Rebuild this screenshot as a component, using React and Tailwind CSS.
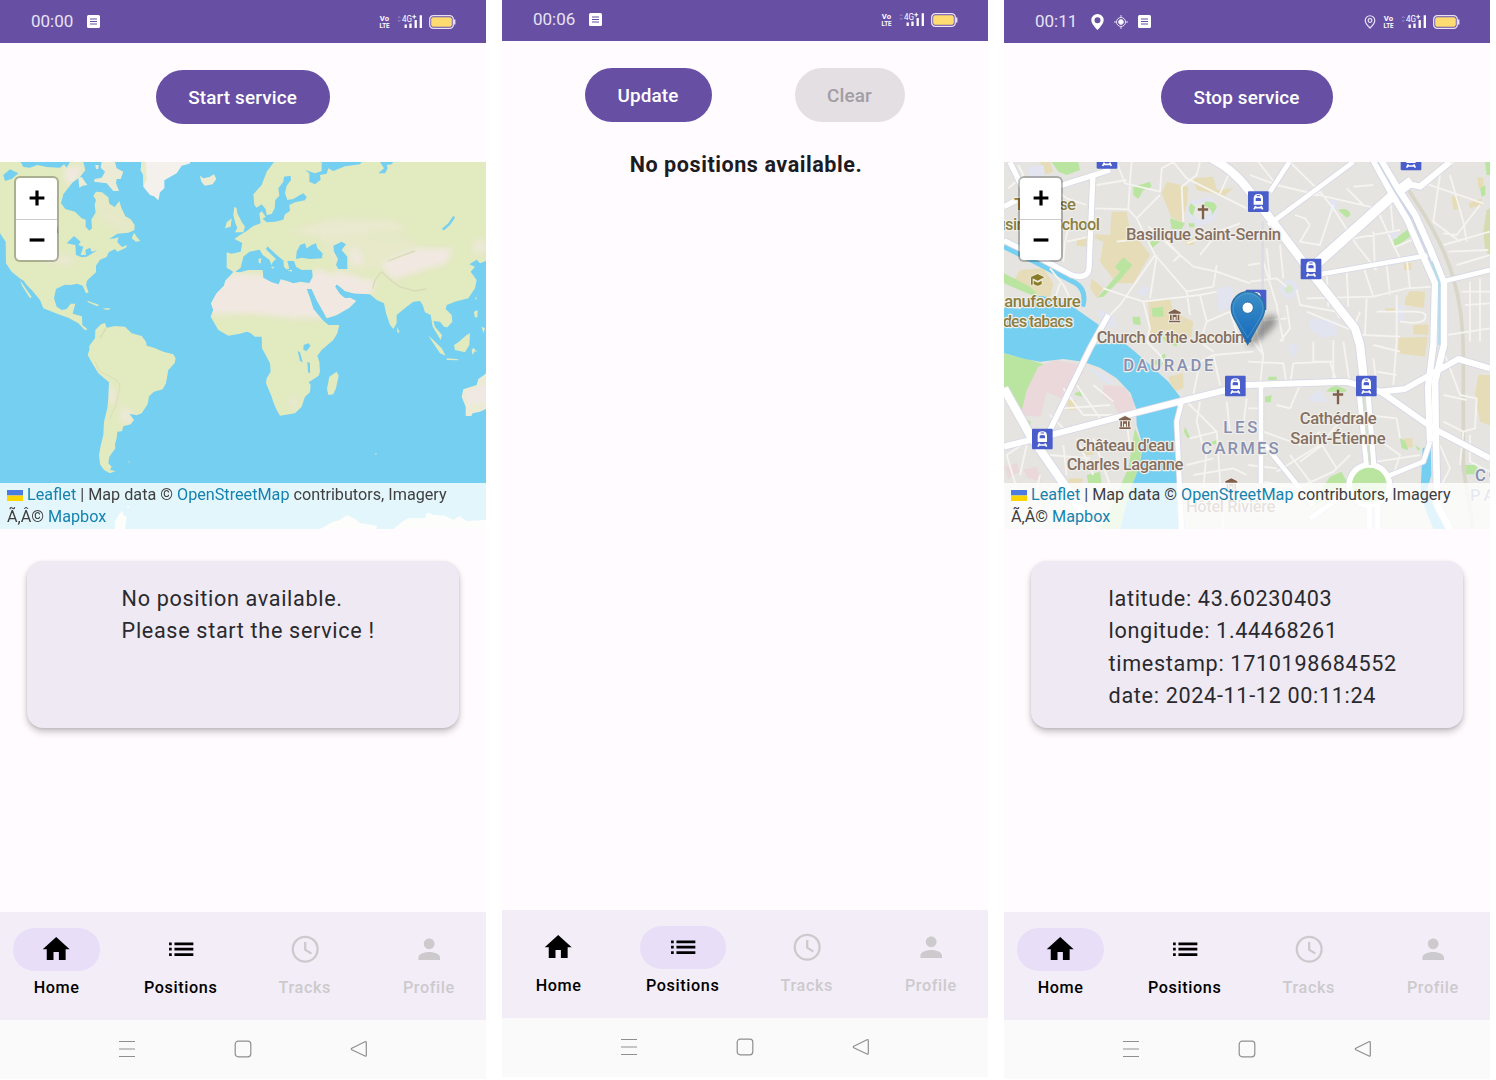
import React from "react";

/* ---------- maps ---------- */

const LAND = "#e2eabf";
const SEA = "#75cff0";

function WorldMap() {
  return (
    <svg className="block h-[367px] w-[486px]" viewBox="0 21 1458 1101" preserveAspectRatio="none">
      <defs>
        <filter id="soft" x="-20%" y="-20%" width="140%" height="140%">
          <feGaussianBlur stdDeviation="9" />
        </filter>
        <clipPath id="land">
          <path id="americas" d="M0,21 L62,21 L70,36 L90,38 L112,30 L140,36 L180,38 L192,28 L200,38 L210,21 L250,21 L256,46 L240,66 L218,82 L207,96 L190,118 L183,145 L196,162 L225,170 L245,190 L257,194 L257,215 L268,227 L276,220 L274,194 L287,172 L284,150 L288,135 L280,122 L288,110 L306,112 L325,127 L328,146 L344,156 L358,138 L364,158 L376,184 L392,193 L404,210 L403,226 L385,233 L352,236 L328,252 L346,250 L356,246 L352,262 L366,276 L381,270 L378,278 L352,290 L345,282 L326,292 L320,306 L300,314 L288,332 L288,352 L262,376 L258,390 L266,412 L258,415 L248,392 L232,386 L212,390 L194,389 L168,402 L162,430 L170,455 L185,465 L200,462 L212,446 L226,446 L218,476 L246,484 L247,510 L263,523 L255,526 L235,505 L205,488 L175,478 L130,460 L120,435 L95,405 L62,372 L35,350 L18,325 L17,260 L0,235 Z" />
          <path d="M268,572 L285,550 L286,525 L303,508 L315,504 L320,518 L345,513 L375,515 L395,535 L425,543 L438,560 L440,572 L462,578 L490,590 L520,598 L527,610 L524,624 L505,645 L498,685 L488,703 L462,710 L447,724 L443,748 L425,775 L410,781 L388,776 L402,795 L392,808 L370,814 L366,829 L352,830 L350,850 L345,868 L346,880 L328,905 L325,925 L335,935 L330,945 L347,948 L330,955 L312,945 L300,928 L297,900 L302,872 L310,840 L312,800 L322,760 L325,730 L327,682 L295,655 L275,622 L263,600 L268,585 Z" />
          <path d="M822,21 L800,50 L785,90 L760,118 L763,150 L770,158 L785,148 L797,163 L800,180 L815,177 L824,160 L826,135 L838,122 L835,100 L850,80 L852,65 L872,62 L873,75 L860,92 L855,115 L862,135 L880,132 L900,120 L910,115 L920,126 L915,136 L885,142 L868,150 L870,168 L855,178 L850,194 L825,200 L800,202 L788,192 L797,185 L785,168 L778,176 L782,205 L760,213 L740,228 L720,240 L703,252 L727,264 L722,290 L695,296 L680,292 L680,338 L700,350 L695,357 L676,377 L672,392 L650,415 L633,445 L640,465 L632,485 L655,525 L685,542 L720,536 L740,530 L750,533 L765,545 L785,545 L786,580 L810,625 L812,650 L800,670 L798,685 L815,725 L820,742 L830,765 L840,782 L885,775 L905,755 L915,725 L930,712 L932,690 L926,682 L956,662 L960,650 L958,620 L952,602 L965,585 L1000,555 L1012,535 L1018,510 L985,510 L970,497 L955,480 L940,462 L930,430 L920,402 L935,402 L950,435 L970,470 L980,490 L1010,480 L1048,458 L1068,438 L1050,428 L1035,430 L1020,418 L1005,395 L1010,388 L1020,395 L1035,408 L1060,415 L1110,418 L1130,435 L1152,445 L1158,475 L1170,510 L1180,522 L1190,505 L1190,480 L1220,455 L1240,440 L1260,438 L1268,450 L1275,472 L1292,480 L1298,515 L1310,535 L1322,555 L1326,540 L1305,515 L1300,498 L1320,500 L1332,515 L1342,517 L1357,500 L1355,480 L1337,462 L1340,450 L1365,440 L1405,430 L1425,400 L1430,375 L1412,350 L1425,335 L1408,328 L1430,314 L1440,325 L1458,318 L1458,21 Z" />
        </clipPath>
      </defs>
      <rect x="0" y="0" width="1458" height="1140" fill={SEA} />
      <g clipPath="url(#land)">
        <rect x="0" y="0" width="1458" height="1140" fill={LAND} />
        <g fill="#f1e8e2" filter="url(#soft)">
          <path d="M620,478 L630,400 L700,352 L790,360 L940,380 L975,480 L960,490 L880,490 L760,476 Z" />
          <path d="M915,380 L950,340 L1000,360 L1030,410 L1110,370 L1130,380 L1110,420 L1070,460 L985,500 L940,440 Z" />
          <path d="M1000,345 L1060,360 L1110,380 L1090,415 L1020,410 Z" />
          <path d="M1050,275 L1075,285 L1090,320 L1060,335 Z" />
          <path d="M1140,330 L1200,300 L1260,280 L1360,280 L1340,325 L1270,345 L1180,375 Z" />
          <path d="M190,40 L250,30 L230,80 L200,90 Z" />
          <path d="M325,690 L342,700 L345,740 L328,750 Z" />
          <path d="M360,750 L400,770 L395,810 L360,800 Z" opacity=".7" />
          <path d="M120,280 L180,300 L230,310 L210,330 L130,320 Z" opacity=".6" />
          <path d="M860,230 L1000,190 L1180,195 L1230,230 L1100,230 L960,250 Z" opacity=".45" />
          <path d="M960,240 L1080,230 L1240,250 L1260,290 L1100,350 L1000,330 Z" opacity=".3" />
          <path d="M280,110 L400,200 L380,240 L300,200 Z" opacity=".3" />
          <path d="M1420,260 L1458,250 L1458,290 L1420,300 Z" opacity=".7" />
          <path d="M870,720 L900,730 L890,765 L860,750 Z" opacity=".5" />
        </g>
        <path d="M1145,350 L1175,378 L1200,396 L1245,408 L1280,402 M1145,350 L1125,375 L1118,400 M1165,318 L1200,304 L1245,288" fill="none" stroke="#d9dbb8" strokeWidth="4" />
        <path d="M285,620 L300,650 L345,672 L360,690 L348,750 L330,790" fill="none" stroke="#dbdcb9" strokeWidth="3" />
        <path d="M300,548 L318,520" fill="none" stroke="#d8d9b6" strokeWidth="4" />
      </g>
      <g fill={SEA}>
        <path d="M706,350 L722,338 L730,305 L748,290 L778,284 L800,280 L802,274 L830,300 L852,318 L856,340 L868,342 L862,318 L882,318 L888,335 L905,345 L936,344 L938,365 L928,384 L902,380 L880,385 L862,378 L842,373 L836,388 L815,382 L790,368 L788,345 L745,345 L720,352 Z" />
        <path d="M888,312 L890,290 L900,270 L915,265 L920,280 L935,270 L948,265 L952,280 L968,295 L966,310 L930,312 L905,308 Z" />
        <path d="M1000,272 L1025,260 L1038,268 L1025,285 L1042,305 L1042,342 L1015,342 L1008,330 L1014,312 L1002,290 Z" />
        <path d="M915,45 L928,55 L928,80 L945,88 L962,74 L960,60 L980,56 L985,40 L1000,48 L1035,34 L1080,28 L1085,21 L965,21 L965,48 L945,55 Z" />
        <path d="M1140,21 L1152,40 L1135,55 L1155,55 L1163,40 L1160,30 L1175,28 L1180,21 Z" />
        <path d="M1360,182 L1365,188 L1350,210 L1332,226 L1325,222 L1345,205 Z" />
        <path d="M200,265 L222,243 L242,260 L235,270 L250,275 L242,300 L258,300 L256,285 L270,278 L275,290 L292,286 L260,305 L245,307 L228,300 L226,270 Z" />
        <path d="M10,60 L30,43 L55,55 L35,72 L15,78 Z M165,215 L172,212 L175,235 L168,235 Z" />
        <path d="M911,570 L925,565 L932,572 L920,588 L910,585 Z M893,588 L900,592 L908,622 L900,618 Z M922,620 L930,625 L930,655 L924,652 Z" />
        <path d="M62,372 L72,378 L100,425 L92,430 Z" />
      </g>
      <g fill={LAND}>
        <path d="M770,268 L790,268 L800,285 L828,312 L818,322 L815,330 L808,314 L788,300 Z M812,335 L822,335 L820,342 Z M775,312 L784,310 L782,325 L777,325 Z M862,345 L876,345 L876,350 Z" />
        <path d="M850,318 L862,330 L862,345 L852,335 Z" />
        <path d="M703,155 L710,160 L712,175 L725,200 L735,215 L730,232 L705,232 L712,218 L706,205 L700,180 Z M680,202 L695,190 L692,215 L675,220 Z" />
        <path d="M1010,650 L1016,662 L1008,700 L1000,718 L985,720 L981,702 L988,665 Z" />
        <path d="M60,375 L95,426 L90,430 L66,392 Z" />
        <path d="M395,250 L402,233 L412,248 L421,258 L408,260 Z M262,437 L298,450 L292,454 L264,442 Z M310,460 L332,460 L325,465 L312,463 Z" />
        <path d="M1285,542 L1300,555 L1325,580 L1337,602 L1320,595 L1300,565 Z M1340,610 L1375,613 L1375,616 L1340,615 Z M1362,570 L1375,562 L1400,540 L1410,535 L1408,570 L1395,592 L1365,585 Z M1415,585 L1420,578 L1432,592 L1425,588 L1418,600 Z M1422,470 L1433,465 L1432,488 L1424,485 Z M1445,515 L1455,520 L1450,535 Z M1190,515 L1199,530 L1193,535 Z M1426,428 L1431,426 L1428,436 Z" />
      </g>
      <g fill="#ecebd5">
        <path d="M602,72 L600,62 L610,70 L628,66 L642,58 L649,72 L638,88 L615,92 L605,82 Z" />
        <path d="M305,21 L345,21 L350,40 L370,50 L362,72 L350,72 L348,85 L357,108 L340,108 L320,85 L282,80 L284,72 L305,68 L315,50 L302,38 Z" />
        <path d="M235,68 L245,66 L262,90 L248,92 L238,98 Z M286,30 L296,30 L295,42 L288,42 Z" />
        <path d="M1458,655 L1452,660 L1435,672 L1430,690 L1390,703 L1385,725 L1397,755 L1397,783 L1414,783 L1418,775 L1440,770 L1458,762 Z" />
      </g>
      <path d="M1395,710 L1458,690 L1458,740 L1405,750 Z" fill="#f0e8e2" />
      <path d="M425,21 L422,45 L430,60 L430,95 L450,120 L462,124 L475,136 L480,112 L493,100 L493,76 L530,55 L545,32 L568,26 L572,21 Z" fill="#f4f1ec" />
      <path d="M425,21 L422,45 L430,60 L432,90 L440,75 L438,21 Z" fill="#e6eccb" />
      <g fill="#f6f6f0">
        <path d="M345,1122 L345,1098 L360,1075 L368,1068 L370,1080 L380,1085 L375,1122 Z M380,1055 L390,1052 L385,1060 Z" />
        <path d="M960,1122 L1000,1100 L1020,1095 L1040,1080 L1065,1092 L1080,1104 L1130,1112 L1130,1122 Z M1180,1122 L1210,1098 L1225,1090 L1275,1090 L1282,1072 L1300,1080 L1335,1082 L1360,1095 L1378,1084 L1400,1098 L1458,1095 L1458,1122 Z" />
      </g>
      <path d="M384,918 l6,2 l-3,4z M1124,896 l6,-1 v4 h-5z" fill="#c8e3da" />
    </svg>
  );
}

const STATIONS = [
  [321, 10], [775, 140], [933, 342], [768, 435], [1233, 15], [706, 693], [1099, 693], [127, 852],
];

function Station({ x, y }) {
  return (
    <g transform={`translate(${x} ${y})`}>
      <rect x="-31" y="-31" width="62" height="62" rx="3" fill="#4a5ecb" />
      <path d="M-14,9 V-10 Q-14,-23 0,-23 Q14,-23 14,-10 V9 Z" fill="#fff" />
      <path d="M-8,-2 V-9 Q-8,-12 0,-12 Q8,-12 8,-9 V-2 Z" fill="#4a5ecb" />
      <path d="M-5,-18 H5" stroke="#4a5ecb" strokeWidth="3" />
      <path d="M-13,23 L-8,13 M13,23 L8,13 M-11,18 H11" stroke="#fff" strokeWidth="5" />
    </g>
  );
}

function Label({ x, y, w, color = "#857062", size = 50, children }) {
  return (
    <text
      x={x}
      y={y}
      textLength={w}
      fontSize={size}
      fill={color}
      stroke="#f1efea"
      strokeWidth="7"
      strokeLinejoin="round"
      paintOrder="stroke"
      className="font-['Roboto',sans-serif] font-medium"
    >
      {children}
    </text>
  );
}

function Museum({ x, y }) {
  return (
    <g transform={`translate(${x} ${y})`} fill="#80604d" stroke="#f1efea" strokeWidth="5" paintOrder="stroke">
      <path d="M-18,-11 L0,-20 L18,-11 V-7 H-18 Z M-14,-4 H-9 V12 H-14 Z M9,-4 H14 V12 H9 Z M-17,14 H17 V19 H-17 Z M-6,-4 H6 V12 H3 V3 H-3 V12 H-6 Z" />
    </g>
  );
}

function Cross({ x, y }) {
  return <path d={`M${x - 3.5},${y - 22} h7 v11 h12 v7 h-12 v26 h-7 v-26 h-12 v-7 h12 z`} fill="#80604d" />;
}

function CityMap() {
  return (
    <svg className="block h-[367px] w-[486px]" viewBox="12 21 1458 1101" preserveAspectRatio="none">
      <defs>
        <linearGradient id="pin" x1="0" y1="0" x2="0" y2="1">
          <stop offset="0" stopColor="#3a8fc7" />
          <stop offset="1" stopColor="#1668bb" />
        </linearGradient>
        <filter id="blur5" x="-30%" y="-30%" width="160%" height="160%">
          <feGaussianBlur stdDeviation="9" />
        </filter>
      </defs>
      <rect x="0" y="0" width="1490" height="1140" fill="#e5e4e0" />
      {/* fields and parks */}
      <g fill="#e6ddb8">
        <path d="M335,170 L380,170 L388,215 L450,300 L400,385 L350,385 L300,320 L310,260 L285,250 L285,238 L330,240 Z" />
        <path d="M485,115 L500,80 L565,95 L560,150 L545,200 L515,190 Z M580,70 L640,65 L650,105 L700,100 L670,125 L640,115 L590,105 Z" />
        <path d="M60,345 L130,340 L160,385 L150,430 L80,410 L40,380 Z M275,370 L310,400 L290,430 L270,400 Z M230,250 L260,245 L260,275 L230,272 Z" />
        <path d="M445,440 L510,430 L520,470 L580,500 L575,545 L520,560 L450,540 Z M120,21 L150,21 L160,50 L130,60 Z" />
        <path d="M505,665 L550,655 L550,700 L520,710 Z M200,735 L228,735 L228,765 L203,765 Z M1215,430 L1230,408 L1275,410 L1272,460 L1215,450 Z M1240,510 L1285,508 L1285,540 L1240,538 Z M1195,548 L1283,545 L1275,605 L1195,595 Z M1435,660 L1480,660 L1480,815 L1440,800 L1425,720 Z M1212,323 h22 v22 h-22z M1355,125 l20,-2 l5,38 l-20,5z M1405,145 L1445,130 L1445,150 L1410,160 Z M1432,65 L1450,70 V100 L1435,100 Z M1210,850 h28 v28 h-20z M975,520 h25 v25 h-25z M205,970 L250,970 L240,1000 L205,1000 Z M250,885 h30 v15 h-30z M555,250 h28 v20 h-25z M1155,460 h30 v10 h-30z" />
      </g>
      <g fill="#b9e5a0">
        <path d="M155,21 L235,21 L240,45 L200,60 L175,50 Z M400,95 L450,80 L455,95 L430,105 L415,132 L400,120 Z M12,355 L90,395 L120,425 L95,420 L12,385 Z" />
        <path d="M345,335 L370,307 L397,330 L360,375 L310,425 L292,428 L360,350 Z M510,190 L555,205 L545,222 L515,222 Z M445,265 L470,250 L480,260 L455,280 Z M397,485 L420,485 L422,510 L400,508 Z M455,460 L490,455 L490,485 L458,485 Z M500,530 L535,540 L530,575 L490,555 Z" />
        <path d="M12,595 L90,615 L130,628 L95,680 L60,790 L30,745 L12,690 Z M75,795 L92,798 L90,820 Z M405,820 L425,870 L420,930 L385,1020 L360,1122 L300,1122 L340,1040 L385,940 Z M225,715 L240,708 L248,725 L225,720 Z M260,960 L300,950 L305,985 L265,985 Z M358,730 L375,725 L390,765 L370,775 Z" />
        <path d="M1180,255 L1225,222 L1230,245 L1185,278 Z M1015,165 Q1045,155 1052,180 L1040,188 Z M980,710 Q1000,680 1040,705 L1035,712 Z M1396,930 h35 v28 h-35z M1440,100 L1456,90 L1456,120 L1445,125 Z M1200,850 L1215,858 L1225,885 L1205,880 Z M1245,870 L1260,880 L1255,888 Z M990,965 L1025,950 L1040,980 L1000,1020 L930,1060 L960,1010 Z M805,665 L830,665 L830,675 L805,675 Z M795,725 L815,720 L812,742 L795,742 Z M1455,21 H1470 V60 L1460,60 Z M555,815 L570,845 L562,850 L552,830 Z M635,860 L650,855 L655,868 L635,868 Z M480,635 L455,625 L495,595 L500,620 Z" />
        <path d="M1460,165 L1470,160 V310 L1455,280 L1450,230 Z" fill="#d5dcb0" />
      </g>
      <path d="M115,635 L165,615 L235,628 L252,645 L225,700 L195,735 L140,710 L122,785 L62,780 L80,705 Z M310,690 L370,695 L402,735 L400,780 L360,785 L340,745 L308,725 Z M12,935 L50,925 L60,950 L25,970 Z M70,945 L110,935 L125,980 L85,970 Z" fill="#ead8da" />
      <g fill="#e2e4ef">
        <path d="M80,35 L130,30 L135,60 L95,75 Z M650,400 L697,392 L705,455 L655,470 Z M430,390 L447,400 L435,425 L410,415 Z M570,140 L635,125 L655,165 L640,200 L590,215 L560,180 Z M290,460 L340,480 L350,520 L310,510 Z M255,635 L320,660 L350,690 L320,685 Z" />
        <circle cx="868" cy="402" r="28" />
        <path d="M930,490 L1010,495 L1010,540 L975,550 L930,525 Z M990,135 h22 v30 h-22z M925,725 L960,705 L985,740 L930,740 Z M865,565 L895,570 L885,605 L868,590 Z M1190,450 h22 v50 h-22z M1165,230 h28 v20 h-28z" />
      </g>
      <circle cx="866" cy="402" r="13" fill="#d6e7cc" />
      <path d="M575,150 Q580,190 600,195 L638,165 L625,142 Z" fill="#e9e8e2" />
      <path d="M572,145 Q558,170 578,182 L586,155 Z M615,140 Q650,138 650,158 L636,180 Q638,160 612,152 Z M565,205 h18 v12 h-14z" fill="#b9e5a0" />
      {/* railway */}
      <path d="M1180,110 Q1210,75 1235,120 Q1330,260 1360,370 Q1390,470 1390,600 V940 L1420,1122" fill="none" stroke="#d7d6c8" strokeWidth="11" />
      {/* river and canals */}
      <path d="M12,455 L60,462 L90,440 L120,422 L155,428 L225,460 L300,512 L268,570 L370,562 L405,590 L450,630 L505,680 L540,725 L530,800 L525,860 L530,930 L545,1000 L555,1122 L360,1122 L385,1020 L420,930 L428,870 L410,810 L408,760 L392,715 L350,670 L300,638 L250,620 L190,612 L120,620 L75,612 L12,594 Z" fill={SEA} />
      <path d="M12,275 L100,318 L225,383 Q262,405 248,455" fill="none" stroke={SEA} strokeWidth="15" />
      <path d="M1268,880 L1292,870 L1294,960 L1280,1010 L1320,1090 L1335,1122 L1300,1122 L1275,1060 L1262,1000 L1265,940 Z" fill={SEA} />
      {/* minor streets */}
      <g fill="none" stroke="#f5f4f0" strokeWidth="5.5" strokeLinejoin="round">
        <path d="M285,160 L385,163 L410,190 L465,300 L560,410 L640,395 M385,163 L390,80 L395,21 M350,21 L375,85 L480,110 L485,40 L520,21 M410,190 L480,120 M445,215 L580,335 L650,350 L750,385 M500,260 L540,300 L520,320 M560,265 L720,205 M600,300 L640,250 L700,235 M465,300 L360,450 L330,480 M450,430 L470,300 M430,440 L600,420 L650,410 M310,400 L430,440 L450,520 L440,560 M600,420 L620,500 L690,470 M560,410 L570,480 M640,395 L650,330 M290,90 L380,75 M160,100 L200,130 L260,150 M200,260 L270,245 M210,200 L195,260 L190,320 M150,340 L190,390 L215,440 M55,30 L70,60 L25,100 M300,21 L290,60 M520,21 L560,70 L740,160 M600,21 L590,60 L545,95 L550,200 M690,50 L660,115 M180,385 L165,430 M350,260 L430,250 M620,500 L600,560 L640,590 M690,470 L720,560 M440,560 L480,600 L500,640" />
        <path d="M750,60 L830,90 L1000,130 L1130,160 M775,21 L830,90 M870,21 L960,110 L1000,160 L1070,270 L1130,345 M900,140 L960,110 M885,180 L915,190 L930,210 M930,210 L900,260 L960,270 L1000,150 M1060,95 L1120,90 M1090,150 L1040,100 M1130,160 L1180,270 L1200,310 M1120,230 L1125,345 M1170,130 L1180,225 M1010,260 L1200,225 M1180,278 L1260,245 M980,345 L985,455 M1040,340 L1045,455 M1090,335 L1120,425 M1160,330 L1170,420 M1220,310 L1230,400 M920,430 L1120,425 L1220,400 L1300,395 M920,470 L1090,540 L1200,545 M1100,430 L1095,540 M1190,420 L1190,560 M1130,470 H1240 Q1285,470 1275,490 Q1270,510 1200,500" />
        <path d="M1270,100 L1360,21 M1260,80 L1450,145 M1320,60 L1300,200 L1380,260 M1350,60 L1390,200 L1400,260 M1330,235 L1370,240 L1440,150 M1330,270 L1470,230 M1345,290 L1465,285 M1370,330 L1470,300 M1385,410 H1470 M1395,450 L1470,445 M1410,380 V560 M1440,370 V560 M1340,540 L1470,520 M1330,720 L1400,735 M1330,800 L1390,830 M1410,840 V920 L1470,950 M1320,560 L1380,720 L1430,730 L1425,820 L1390,830 L1380,930 M1320,870 L1350,940 L1320,1000 M1080,470 L1060,520 M990,440 L1020,490" />
        <path d="M760,560 L790,600 L780,690 M745,440 L790,600 M790,320 L830,450 L850,560 M745,330 L780,325 M750,380 L830,370 L860,395 M800,280 L810,370 M840,270 L850,370 M890,405 L900,450 L1010,470 M860,450 L870,520 L840,560 M750,500 L860,490 M745,620 L850,625 L860,690 M870,690 L880,625 L990,620 L1010,680 M1000,555 V680 M940,560 V620 L1000,620 M1030,560 L1050,690 M1120,570 L1200,590 M1130,650 L1190,660 M1120,610 L1130,690 M1190,560 L1180,690 M830,750 L870,760 L900,690 M790,830 L900,870 L960,830 M830,950 L960,870 L1020,800 M900,920 L980,860 M930,980 L870,900 M870,1010 L1000,950 L1050,900 M960,860 L1010,940 M1100,780 L1190,790 L1200,850 M1130,850 L1200,900 L1180,960 M1130,920 L1260,900 M790,980 L900,1000 M745,760 L790,760 M745,930 L830,940" />
        <path d="M560,640 L640,600 L760,590 M600,620 L580,720 M640,600 L660,690 M560,740 L650,830 L670,1122 M570,850 L650,830 M600,740 L590,800 L610,880 M680,740 L690,830 M560,930 L640,910 M580,960 L700,940 L740,960 M620,880 L610,1010 M740,730 L730,810 M190,700 L250,780 L340,780 M230,690 L300,790 M190,760 L330,750 M150,780 L200,830 M280,690 L340,740 M230,850 L280,960 M280,850 L330,990 M190,870 L200,960 M150,900 L270,910 M110,840 L20,900 M20,900 L50,1000 M80,870 L60,960 M120,960 L90,1100 M380,800 L390,880" />
      </g>
      {/* main roads */}
      <path d="M788,200 V555" fill="none" stroke="#d9d9e7" strokeWidth="8" opacity=".8" />
      {[["#d6d7e6", 5], ["#ffffff", 0]].map(([c, extra]) => (
        <g key={c} fill="none" stroke={c} strokeLinejoin="round">
          <path strokeWidth={16 + extra} d="M12,257 L100,299 L215,360 Q262,375 267,340 L279,55 M12,155 L60,130 L330,45 M30,21 L70,105 M325,480 L270,580 L145,835" />
          <path strokeWidth={18 + extra} d="M12,875 L160,838 L350,788 L545,738 L738,690 L1038,680 L1140,710 L1215,702 L1375,612 L1470,640" />
          <path strokeWidth={14 + extra} d="M545,740 L530,800 L545,1122 M805,210 L1060,21 M810,110 L868,21 M965,357 L1290,300 M1325,380 L1470,345 M783,690 L783,985 M795,870 L940,1050 M1160,965 L1270,920 L1290,860 M930,1090 L1060,1000" />
          <path strokeWidth={25 + extra} d="M12,700 L90,840 L190,985 L280,1122 M610,0 Q690,30 750,110 L920,335 L1065,520 L1080,570 L1092,680" />
          <path strokeWidth={30 + extra} d="M945,330 L1180,120 L1235,78" />
          <path strokeWidth={18 + extra} d="M1220,85 L1260,95 L1350,21 M1140,708 L1300,820 L1470,910" />
          <path strokeWidth={19 + extra} d="M1120,15 L1172,110 L1222,195 L1270,305 L1305,385 L1300,570 L1284,700 L1290,860" />
          <path strokeWidth={20 + extra} d="M1142,15 L1190,95 L1246,180 L1292,285 L1332,385 L1332,570 L1305,680 L1308,870 L1312,1050 L1350,1122" />
          <path strokeWidth={15 + extra} d="M1075,690 L1100,935 M1102,690 L1122,935 M1108,1050 V1122 M1133,1050 V1122" />
          <circle cx="1108" cy="990" r="60" strokeWidth={18 + extra} />
        </g>
      ))}
      <path d="M1133,20 L1182,105 L1236,190 L1282,295 L1305,350" fill="none" stroke="#cdd6e6" strokeWidth="5" />
      <path d="M1295,320 L1318,380 V570" fill="none" stroke="#b5dcec" strokeWidth="7" />
      <path d="M1088,700 L1110,930" stroke="#d5decf" strokeWidth="7" />
      <circle cx="1108" cy="990" r="52" fill="#b9e5a0" />
      {/* labels */}
      <Label x={42} y={165} w={186} color="#8b7f42">Toulouse</Label>
      <Label x={-40} y={225} w={340} color="#8b7f42">Business School</Label>
      <g transform="translate(111 375)" fill="#8a7b25" stroke="#f1efea" strokeWidth="4" paintOrder="stroke">
        <path d="M-20,-8 L2,-18 L22,-8 L2,2 Z M-10,2 L2,8 L14,2 V12 Q2,22 -10,12 Z M-18,-6 h5 v20 h-5z" />
      </g>
      <Label x={-30} y={457} w={272} color="#8b7f42">Manufacture</Label>
      <Label x={8} y={515} w={212} color="#8b7f42">des tabacs</Label>
      <Cross x={609} y={171} />
      <Label x={378} y={256} w={465}>Basilique Saint-Sernin</Label>
      <Museum x={524} y={483} />
      <Label x={290} y={565} w={466}>Church of the Jacobins</Label>
      <Label x={370} y={648} w={270} color="#8890b2">DAURADE</Label>
      <Label x={670} y={835} w={102} color="#8890b2">LES</Label>
      <Label x={604} y={897} w={232} color="#8890b2">CARMES</Label>
      <Cross x={1014} y={726} />
      <Label x={899} y={808} w={231}>Cathédrale</Label>
      <Label x={871} y={866} w={286}>Saint-Étienne</Label>
      <Museum x={375} y={803} />
      <Label x={227} y={887} w={296}>Château d'eau</Label>
      <Label x={200} y={945} w={350}>Charles Laganne</Label>
      <Museum x={694} y={990} />
      <Label x={558} y={1070} w={268}>Hôtel Rivière</Label>
      <Label x={1425} y={978} w={76} color="#8890b2">CO</Label>
      <Label x={1410} y={1038} w={74} color="#8890b2">PA</Label>
      {STATIONS.map(([x, y]) => (
        <Station key={`${x}-${y}`} x={x} y={y} />
      ))}
      {/* location pin */}
      <path d="M742,568 L785,495 Q820,470 830,490 Q835,520 750,574 Z" fill="#000" opacity=".35" filter="url(#blur5)" />
      <path
        d="M743,568 L710,504 Q694,480 694,460 A50,50 0 0 1 794,460 Q794,480 778,504 Z"
        fill="url(#pin)"
        stroke="#2c6fa5"
        strokeWidth="4"
      />
      <path d="M743,548 L714,500 Q699,476 699,460 A45,45 0 0 1 789,460 Q789,476 774,500 Z" fill="none" stroke="#69aad6" strokeWidth="3" opacity=".5" />
      <circle cx="743" cy="458" r="17" fill="#fff" stroke="#2c6fa5" strokeWidth="3" />
    </svg>
  );
}

function MapBox({ children }) {
  return (
    <div className="relative mt-[38px] h-[367px] w-full overflow-hidden">
      {children}
      <div className="absolute left-[14px] top-[14px] flex h-[86px] w-[45px] flex-col rounded-[6px] border-2 border-black/25 bg-white bg-clip-padding">
        <div className="flex h-[42px] items-center justify-center border-b border-[#ccc] pb-px pl-px">
          <svg viewBox="0 0 16 16" className="h-4 w-4" stroke="#000" strokeWidth="3.2"><path d="M.6 8H15.4M8 .6V15.4" /></svg>
        </div>
        <div className="flex flex-1 items-center justify-center pb-px pl-px">
          <svg viewBox="0 0 16 16" className="h-4 w-4" stroke="#000" strokeWidth="3.2"><path d="M.6 8H15.4" /></svg>
        </div>
      </div>
      <div className="absolute inset-x-0 bottom-0 h-[46px] whitespace-nowrap bg-white/80 px-[7px] pt-px text-[16.2px] leading-[22px] text-[#404040]">
        <div className="flex items-center">
          <svg viewBox="0 0 16 11" className="mr-1 h-[11px] w-4">
            <path fill="#4c7be1" d="M0 0h16v5.5H0z" />
            <path fill="#ffd500" d="M0 5.5h16V11H0z" />
          </svg>
          <span className="whitespace-pre">
            <span className="text-[#1583ae]">Leaflet</span> | Map data © <span className="text-[#1583ae]">OpenStreetMap</span> contributors, Imagery
          </span>
        </div>
        <div>Ã‚Â© <span className="text-[#1583ae]">Mapbox</span></div>
      </div>
    </div>
  );
}

/* ---------- status bar ---------- */

function NoteIcon() {
  return (
    <svg viewBox="0 0 13 13" className="h-[13px] w-[13px]">
      <rect width="13" height="13" rx="1.5" fill="#fff" />
      <path d="M3 4h7M3 6.5h7M3 9h7" stroke="#6750a4" strokeWidth="1.1" />
    </svg>
  );
}

function StatusBar({ time, located, tall }) {
  return (
    <div className={`flex shrink-0 items-center bg-[#6750a4] pl-[31px] pr-[30px] text-[#e8e2f4] ${tall ? "h-[43px]" : "h-[41px] pb-[2px]"}`}>
      <span className="w-[43px] text-[17px] leading-none">{time}</span>
      {located ? (
        <div className="ml-[13px] flex items-center">
          <svg viewBox="0 0 13 16" className="h-4 w-[13px]">
            <path fillRule="evenodd" fill="#fff" d="M6.5 0A6.2 6.2 0 0 0 .3 6.2C.3 10 6.500 16 6.500 16S12.700 10 12.700 6.200A6.200 6.200 0 0 0 6.500 0ZM6.500 3.200a3 3 0 1 1 0 6 3 3 0 0 1 0-6Z" />
          </svg>
          <svg viewBox="0 0 14 14" className="ml-[10px] h-[14px] w-[14px]" fill="none" stroke="#e8e2f4">
            <circle cx="7" cy="7" r="4.500" />
            <circle cx="7" cy="7" r="2.400" fill="#fff" />
            <path d="M7 0v2.500M7 11.500V14M0 7h2.500M11.500 7H14" />
          </svg>
          <div className="ml-[10px]"><NoteIcon /></div>
        </div>
      ) : (
        <div className="ml-[13px]"><NoteIcon /></div>
      )}
      <div className="ml-auto flex items-center">
        {located && (
          <svg viewBox="0 0 12 15" className="mr-[7px] h-[14px] w-[12px]" fill="none" stroke="#e8e2f4" strokeWidth="1.300">
            <path d="M6 .8A5.100 5.100 0 0 0 .9 5.900C.9 9.300 6 14 6 14s5.100-4.700 5.100-8.100A5.100 5.100 0 0 0 6 .8Z" />
            <circle cx="6" cy="5.900" r="2" />
          </svg>
        )}
        <svg viewBox="0 0 11 15" className="h-[15px] w-[11px] overflow-visible font-['Roboto',sans-serif] font-bold" fill="#fff">
          <text x="0.800" y="7" fontSize="8" textLength="9.200" lengthAdjust="spacingAndGlyphs">Vo</text>
          <text x="0.500" y="14" fontSize="8" textLength="10" lengthAdjust="spacingAndGlyphs">LTE</text>
        </svg>
        <svg viewBox="0 0 26 15" className="ml-[7px] h-[15px] w-[26px] overflow-visible">
          <path d="M1 4l1.200-1.500L3.400 4M1 6l1.200 1.500L3.400 6" fill="none" stroke="#a396c9" strokeWidth=".8" />
          <text x="5" y="7.600" fontSize="8.500" textLength="10" lengthAdjust="spacingAndGlyphs" fill="#fff" className="font-['Roboto',sans-serif]">4G</text>
          <path d="M15.200 2.800h4M17.200 .8v4" stroke="#fff" strokeWidth="1.100" />
          <path d="M8.700 10.500V14M13.500 9.500V14M18.700 6V14M23.800 1.200V14" stroke="#fff" strokeWidth="2.300" />
        </svg>
        <svg viewBox="0 0 27 14" className="ml-[6px] h-[14px] w-[27px]">
          <rect x=".7" y=".7" width="23.600" height="12.600" rx="3.600" fill="#6750a4" stroke="#e8e2f4" strokeWidth="1.300" />
          <rect x="2.200" y="2.200" width="20.600" height="9.600" rx="2" fill="#ffdc72" />
          <path d="M25.700 4.500v5" stroke="#e8e2f4" strokeWidth="1.400" />
        </svg>
      </div>
    </div>
  );
}

/* ---------- bottom navigation ---------- */

const ICONS = {
  Home: <path d="M10 20v-6h4v6h5v-8h3L12 3 2 12h3v8z" />,
  Positions: <path d="M3 7h2v2H3zM3 11h2v2H3zM3 15h2v2H3zM7 7h14v2H7zM7 11h14v2H7zM7 15h14v2H7z" />,
  Tracks: (
    <g fill="none" stroke="currentColor" strokeWidth="1.700">
      <circle cx="12" cy="12" r="9.200" />
      <path d="M12 6.600V12.400L16.600 15.300" />
    </g>
  ),
  Profile: <path d="M12 12c2.210 0 4-1.790 4-4s-1.790-4-4-4-4 1.790-4 4 1.790 4 4 4zm0 2c-2.670 0-8 1.340-8 4v2h16v-2c0-2.660-5.330-4-8-4z" />,
};

function NavBar({ active }) {
  return (
    <div className="grid h-[108px] shrink-0 grid-cols-4 gap-[10.900px] bg-[#f3edf7] pr-[0.500px] pt-[16px]">
      {Object.entries(ICONS).map(([name, icon]) => {
        const disabled = name === "Tracks" || name === "Profile";
        return (
          <div key={name} className={`flex flex-col items-center ${disabled ? "text-[#cccacd]" : "text-black"}`}>
            <div className={`flex h-[43px] w-[86.400px] items-center justify-center rounded-full ${name === active ? "bg-[#e8def8]" : ""}`}>
              <svg viewBox="0 0 24 24" className="h-[32.400px] w-[32.400px]" fill="currentColor">{icon}</svg>
            </div>
            <span className="mt-[6px] text-[16.200px] font-medium leading-[22px] tracking-[0.620px]">{name}</span>
          </div>
        );
      })}
    </div>
  );
}

function SystemBar() {
  return (
    <div className="flex h-[59px] shrink-0 items-center justify-center gap-[98px] bg-[#fafafa] pb-px text-[#8f8f8f]">
      <svg viewBox="0 0 18 18" className="h-[18px] w-[18px]" fill="none" stroke="currentColor" strokeWidth="1.200">
        <path d="M1 1.500h16M1 9h16M1 16.500h16" />
      </svg>
      <svg viewBox="0 0 18 18" className="h-[18px] w-[18px]" fill="none" stroke="currentColor" strokeWidth="1.200">
        <rect x="1.200" y="1.200" width="15.600" height="15.600" rx="3" />
      </svg>
      <svg viewBox="0 0 18 18" className="h-[18px] w-[18px]" fill="none" stroke="currentColor" strokeWidth="1.200" strokeLinejoin="round">
        <path d="M1.800 8.200 L15 1.700 Q16.300 1.300 16.300 2.500 V15.300 Q16.300 16.600 15 16 L1.800 9.700 Q.8 9 1.800 8.200Z" />
      </svg>
    </div>
  );
}

function Button({ children, disabled }) {
  return (
    <button
      className={`h-[54px] rounded-full pl-[32.400px] pr-[33.200px] pt-[2px] text-[18.900px] font-medium tracking-[0.135px] ${
        disabled ? "bg-[#e4dfe3] text-[#a29da3]" : "bg-[#6750a4] text-white"
      }`}
    >
      {children}
    </button>
  );
}

function Phone({ time, located, active, tall = true, children }) {
  return (
    <div className={`flex w-[486px] shrink-0 flex-col overflow-hidden bg-[#fffbfe] ${tall ? "h-[1079px]" : "h-[1077px]"}`}>
      <StatusBar time={time} located={located} tall={tall} />
      <div className="flex flex-1 flex-col">{children}</div>
      <NavBar active={active} />
      <SystemBar />
    </div>
  );
}

function Card({ lines, pad }) {
  return (
    <div className={`mx-[27px] mt-[32px] h-[167px] rounded-[16px] bg-[#eee9f3] pt-[22px] text-[21.600px] leading-[32.400px] tracking-[0.675px] text-[#2a292d] shadow-[0_4px_7px_rgba(0,0,0,0.22),0_1px_3px_rgba(0,0,0,0.1)] ${pad}`}>
      {lines.map((l) => (
        <div key={l} className="whitespace-nowrap">{l}</div>
      ))}
    </div>
  );
}

export default function App() {
  return (
    <div className="flex h-[1080px] w-[1496px] items-start gap-4 overflow-hidden bg-white font-['Roboto',sans-serif]">
      <Phone time="00:00" active="Home">
        <div className="flex justify-center pt-[27px]"><Button>Start service</Button></div>
        <MapBox><WorldMap /></MapBox>
        <Card pad="pl-[94.600px]" lines={["No position available.", "Please start the service !"]} />
      </Phone>
      <Phone time="00:06" active="Positions" tall={false}>
        <div className="flex justify-center gap-[83px] pt-[27px]">
          <Button>Update</Button>
          <Button disabled>Clear</Button>
        </div>
        <div className="mt-[27px] pl-[2px] text-center text-[21.600px] font-bold leading-[32.400px] tracking-[0.540px] text-[#1c1b1f]">No positions available.</div>
      </Phone>
      <Phone time="00:11" active="Home" located>
        <div className="flex justify-center pt-[27px]"><Button>Stop service</Button></div>
        <MapBox><CityMap /></MapBox>
        <Card
          pad="pl-[77.600px]"
          lines={["latitude: 43.60230403", "longitude: 1.44468261", "timestamp: 1710198684552", "date: 2024-11-12 00:11:24"]}
        />
      </Phone>
    </div>
  );
}
